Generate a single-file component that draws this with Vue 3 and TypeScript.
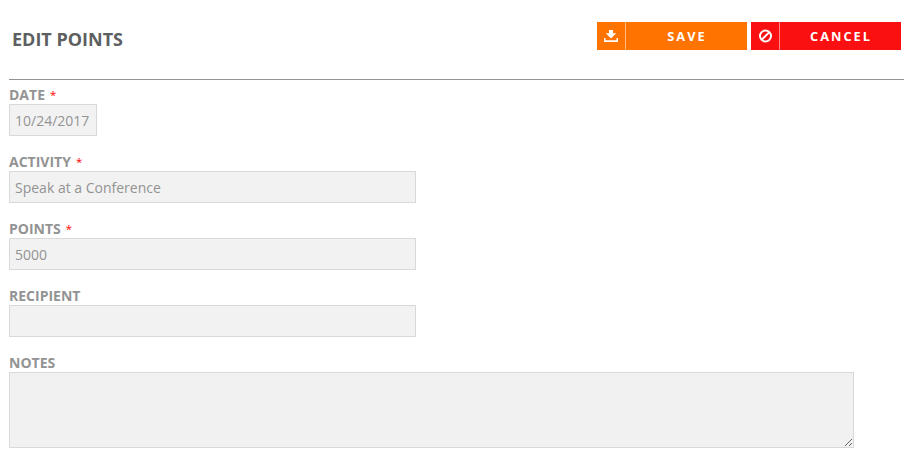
<script setup lang="ts">
import { ref } from 'vue'

interface Field {
  id: string
  label: string
  required: boolean
  kind: 'short' | 'medium' | 'area'
  value: string
}

const fields = ref<Field[]>([
  { id: 'date', label: 'DATE', required: true, kind: 'short', value: '10/24/2017' },
  { id: 'activity', label: 'ACTIVITY', required: true, kind: 'medium', value: 'Speak at a Conference' },
  { id: 'points', label: 'POINTS', required: true, kind: 'medium', value: '5000' },
  { id: 'recipient', label: 'RECIPIENT', required: false, kind: 'medium', value: '' },
  { id: 'notes', label: 'NOTES', required: false, kind: 'area', value: '' },
])
</script>

<template>
  <form class="page" @submit.prevent>
    <header class="header">
      <h1 class="title">EDIT POINTS</h1>
      <div class="actions">
        <button type="submit" class="btn save">
          <span class="icon">
            <svg width="14" height="12" viewBox="0 0 14 12" fill="#fff">
              <path d="M5 0h4v3.2h3.2L7 8.4 1.8 3.2H5z" />
              <path d="M0 8h1.5v2.2h11V8H14v4H0z" />
            </svg>
          </span>
          <span class="text">SAVE</span>
        </button>
        <button type="button" class="btn cancel">
          <span class="icon">
            <svg width="14" height="14" viewBox="0 0 14 14" fill="none" stroke="#fff" stroke-width="2">
              <circle cx="7.5" cy="7" r="5.5" />
              <path d="M3.6 10.9l7.8-7.8" />
            </svg>
          </span>
          <span class="text">CANCEL</span>
        </button>
      </div>
    </header>
    <div v-for="field in fields" :key="field.id" class="field">
      <label class="label" :for="field.id">{{ field.label }}<span v-if="field.required" class="required">*</span></label>
      <textarea v-if="field.kind === 'area'" :id="field.id" v-model="field.value" class="control area"></textarea>
      <input v-else :id="field.id" v-model="field.value" type="text" class="control" :class="field.kind" />
    </div>
  </form>
</template>

<style>
body {
  background: #fff;
}
</style>

<style scoped>
.page {
  box-sizing: border-box;
  height: 461px;
  padding: 0 6px 0 9px;
  overflow: hidden;
  font-family: "Open Sans", sans-serif;
}
.header {
  box-sizing: border-box;
  display: flex;
  justify-content: space-between;
  align-items: flex-start;
  height: 80px;
  margin-bottom: 5px;
  padding: 22px 3px 0;
  border-bottom: 1px solid #939393;
}
.title {
  margin: 5px 0 0;
  color: #5d5f61;
  font-size: 18px;
  line-height: 24px;
  font-weight: 700;
}
.actions {
  display: flex;
  gap: 4px;
}
.btn {
  display: flex;
  width: 150px;
  height: 28px;
  padding: 0;
  border: 0;
  color: #fff;
  font-family: inherit;
  font-size: 12.8px;
  font-weight: 700;
  letter-spacing: 2px;
}
.save {
  background: #ff7300;
}
.cancel {
  background: #fa1010;
}
.icon {
  display: flex;
  align-items: center;
  justify-content: center;
  box-sizing: border-box;
  width: 29px;
  height: 28px;
  border-right: 1px solid rgba(255, 255, 255, 0.5);
}
.text {
  flex: 1;
  padding-left: 1px;
  line-height: 28px;
  text-align: center;
}
.field {
  margin-bottom: 16px;
}
.label {
  display: block;
  height: 19px;
  color: #939393;
  font-size: 14px;
  font-weight: 700;
  line-height: 19px;
}
.required {
  margin-left: 5px;
  color: #f00;
  font-size: 11.4px;
  font-weight: 400;
  line-height: 1;
  vertical-align: 1px;
}
.control {
  display: block;
  box-sizing: border-box;
  height: 32px;
  margin: 0;
  padding: 0 5px;
  border: 1px solid #d9d9d9;
  border-radius: 0;
  outline: 0;
  background: #f2f2f2;
  color: #939393;
  font-family: inherit;
  font-size: 14px;
}
.short {
  width: 88px;
}
.medium {
  width: 407px;
}
.area {
  width: 845px;
  height: 76px;
  background: #f1f1f1;
  resize: both;
}
</style>
